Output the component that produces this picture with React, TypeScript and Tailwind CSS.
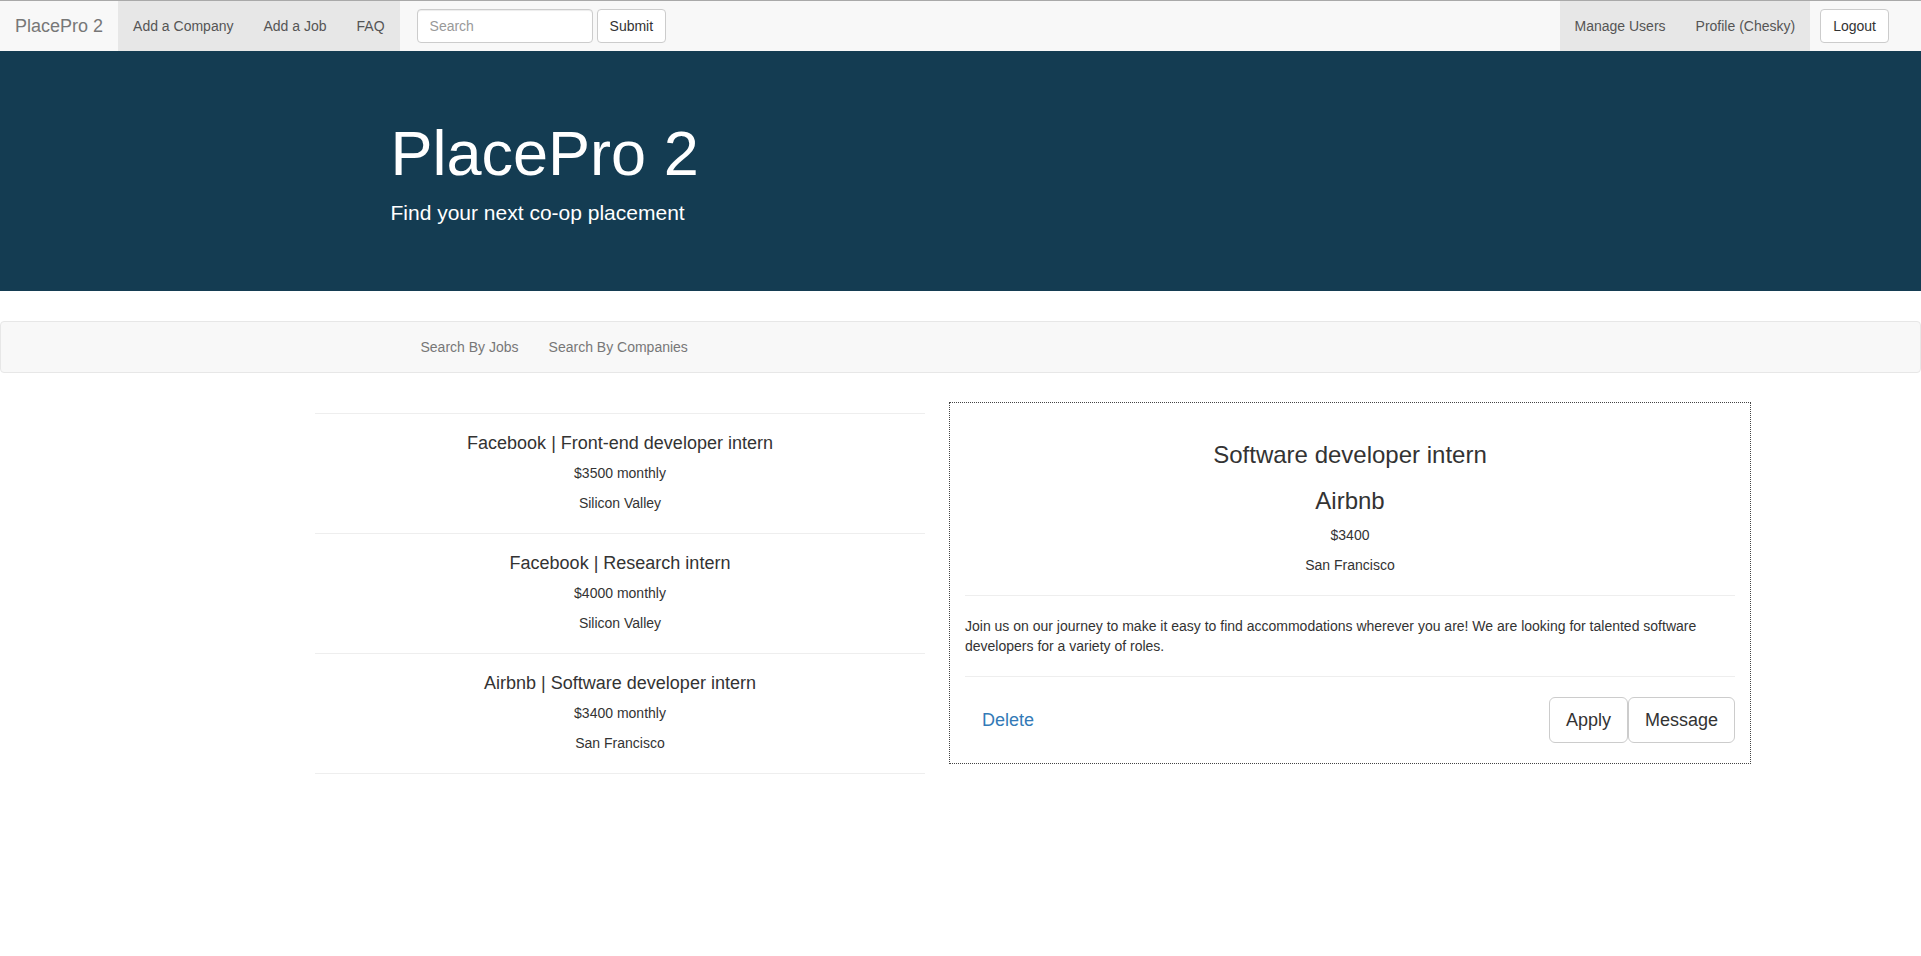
const jobs = [
  {
    company: "Facebook",
    title: "Front-end developer intern",
    pay: "$3500 monthly",
    location: "Silicon Valley",
  },
  {
    company: "Facebook",
    title: "Research intern",
    pay: "$4000 monthly",
    location: "Silicon Valley",
  },
  {
    company: "Airbnb",
    title: "Software developer intern",
    pay: "$3400 monthly",
    location: "San Francisco",
  },
];

function TopNav() {
  return (
    <nav className="flex h-[51px] border-t border-[#a9a9a9] bg-[#f8f8f8]">
      <a className="px-[15px] py-[15px] text-[18px] leading-[20px] text-[#777]">
        PlacePro 2
      </a>
      <ul className="flex bg-[#e7e7e7]">
        {["Add a Company", "Add a Job", "FAQ"].map((item) => (
          <li key={item}>
            <a className="block px-[15px] py-[15px] text-[#555]">{item}</a>
          </li>
        ))}
      </ul>
      <form className="ml-[17px] mt-[8px] flex h-[34px] gap-[4px]">
        <input
          placeholder="Search"
          className="h-[34px] w-[176px] rounded-[4px] border border-[#ccc] bg-white px-[12px] text-[14px] text-[#555] shadow-[inset_0_1px_1px_rgba(0,0,0,0.075)] placeholder:text-[#999]"
        />
        <button className="h-[34px] rounded-[4px] border border-[#ccc] bg-white px-[12px] text-[#333]">
          Submit
        </button>
      </form>
      <div className="ml-auto flex">
        <ul className="flex bg-[#e7e7e7]">
          {["Manage Users", "Profile (Chesky)"].map((item) => (
            <li key={item}>
              <a className="block px-[15px] py-[15px] text-[#555]">{item}</a>
            </li>
          ))}
        </ul>
        <button className="ml-[10px] mr-[32px] mt-[8px] h-[34px] rounded-[4px] border border-[#ccc] bg-white px-[12px] text-[#333]">
          Logout
        </button>
      </div>
    </nav>
  );
}

function JobRow({ job }: { job: (typeof jobs)[number] }) {
  return (
    <div className="border-t border-[#eee] py-[10px] text-center">
      <h4 className="my-[10px] text-[18px] leading-[19px]">
        {job.company} | {job.title}
      </h4>
      <p className="mb-[10px]">{job.pay}</p>
      <p className="mb-[10px]">{job.location}</p>
    </div>
  );
}

export default function App() {
  const selected = jobs[2];

  return (
    <div className="min-h-screen bg-white font-['Liberation_Sans',Arial,sans-serif] text-[14px] leading-[20px] text-[#333]">
      <TopNav />

      <header className="bg-[#143c52] py-[48px] text-white">
        <div className="mx-auto w-[1170px] px-[15px]">
          <h1 className="mb-[10px] mt-[20px] text-[63px] leading-[69px]">PlacePro 2</h1>
          <p className="mb-[15px] text-[21px] leading-[30px]">Find your next co-op placement</p>
        </div>
      </header>

      <nav className="mt-[30px] h-[52px] rounded-[4px] border border-[#e7e7e7] bg-[#f8f8f8]">
        <ul className="mx-auto flex w-[1170px] px-[30px]">
          {["Search By Jobs", "Search By Companies"].map((item) => (
            <li key={item}>
              <a className="block px-[15px] py-[15px] text-[#777]">{item}</a>
            </li>
          ))}
        </ul>
      </nav>

      <main className="ml-[315px] mt-[29px] flex items-start gap-[24px]">
        <div className="mt-[11px] w-[610px] border-b border-[#eee]">
          {jobs.map((job) => (
            <JobRow key={job.title} job={job} />
          ))}
        </div>

        <section className="w-[802px] border border-dotted border-[#444] px-[15px] pb-[20px] pt-[39px]">
          <div className="text-center">
            <h3 className="mb-[20px] text-[24px] leading-[26px]">{selected.title}</h3>
            <h3 className="mb-[11px] text-[24px] leading-[26px]">{selected.company}</h3>
            <p className="mb-[10px]">$3400</p>
            <p>{selected.location}</p>
          </div>
          <hr className="my-[20px] border-[#eee]" />
          <p>
            Join us on our journey to make it easy to find accommodations wherever you
            are! We are looking for talented software developers for a variety of roles.
          </p>
          <hr className="my-[20px] border-[#eee]" />
          <div className="flex items-center justify-between">
            <button className="border border-transparent px-[16px] py-[10px] text-[18px] leading-[24px] text-[#337ab7]">
              Delete
            </button>
            <div className="flex">
              <button className="rounded-[6px] border border-[#ccc] bg-white px-[16px] py-[10px] text-[18px] leading-[24px] text-[#333]">
                Apply
              </button>
              <button className="rounded-[6px] border border-[#ccc] bg-white px-[16px] py-[10px] text-[18px] leading-[24px] text-[#333]">
                Message
              </button>
            </div>
          </div>
        </section>
      </main>
    </div>
  );
}
